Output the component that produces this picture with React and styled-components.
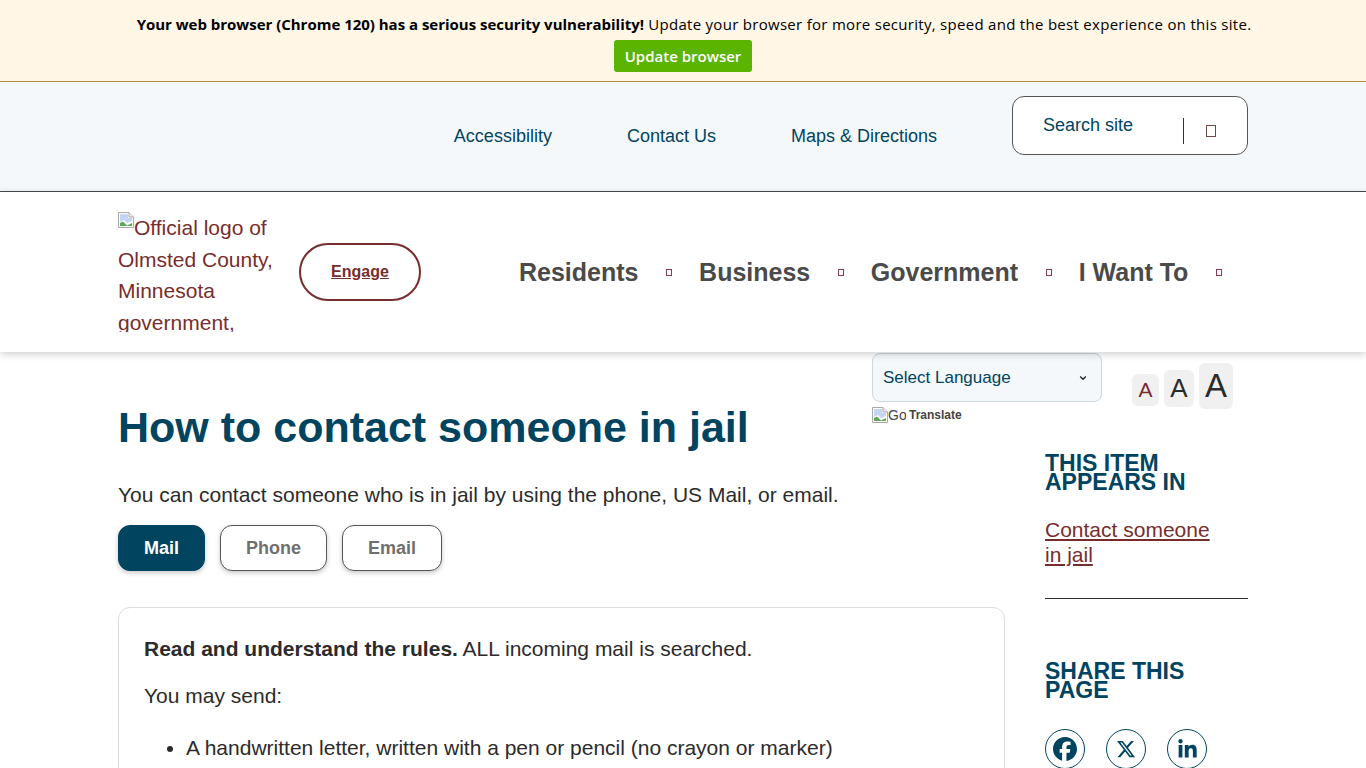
import React from 'react'
import styled, { createGlobalStyle } from 'styled-components'
import { FaFacebook, FaXTwitter, FaLinkedinIn } from 'react-icons/fa6'

const navLinks = ['Accessibility', 'Contact Us', 'Maps & Directions']
const menuItems = ['Residents', 'Business', 'Government', 'I Want To']
const tabs = ['Mail', 'Phone', 'Email']

const BrokenImage = ({ size = 16 }) => (
    <svg width={size} height={size} viewBox='0 0 16 16'>
        <path d='M0.5 0.5H11L15.5 5V15.5H0.5Z' fill='#fff' stroke='#a9a9a9' />
        <path d='M11 0.5V5H15.5' fill='#e8e8e8' stroke='#a9a9a9' />
        <path d='M2 2H10V6H14V9L9 11L6 8L2 10Z' fill='#c3d5f2' />
        <path d='M2 14V11L5 9.5L9 13.5L14 11V14Z' fill='#5fa65a' />
    </svg>
)

const App = () => {
    return (
        <>
            <GlobalStyle />
            <Banner>
                <BannerText>
                    <b>Your web browser (Chrome 120) has a serious security vulnerability!</b> Update your browser for more security, speed and the best experience on this site.
                </BannerText>
                <UpdateButton>Update browser</UpdateButton>
            </Banner>

            <TopBar>
                <TopInner>
                    <TopLinks>
                        {navLinks.map(link => <TopLink key={link}>{link}</TopLink>)}
                    </TopLinks>
                    <SearchBox>
                        <SearchLabel>Search site</SearchLabel>
                        <SearchDivider />
                        <MissingGlyph $w={10} $h={12} $color='#6b4a4a' />
                    </SearchBox>
                </TopInner>
            </TopBar>

            <Header>
                <HeaderInner>
                    <Logo>
                        <LogoIcon><BrokenImage /></LogoIcon>Official logo of Olmsted County, Minnesota government, home page
                    </Logo>
                    <EngageButton>Engage</EngageButton>
                    <Menu>
                        {menuItems.map(item => (
                            <MenuItem key={item}>
                                {item}
                                <MissingGlyph $w={6} $h={7} $color='#8a3a4a' />
                            </MenuItem>
                        ))}
                    </Menu>
                </HeaderInner>
            </Header>

            <Page>
                <Tools>
                    <Translate>
                        <LanguageSelect>
                            Select Language
                            <Chevron viewBox='0 0 8 6'>
                                <path d='M1.2 1.5L4 4.3L6.8 1.5' fill='none' stroke='#222' strokeWidth='1.3' />
                            </Chevron>
                        </LanguageSelect>
                        <Powered>
                            <PoweredLogo><BrokenImage /><span>Google</span></PoweredLogo>
                            Translate
                        </Powered>
                    </Translate>
                    <FontSizes>
                        <FontSize $size={21} $box={27} $h={32} $lift={3} $color='#7a2b2b'>A</FontSize>
                        <FontSize $size={26} $box={30} $h={37} $lift={2} $color='#2b2b2b'>A</FontSize>
                        <FontSize $size={33} $box={34} $h={46} $lift={0} $color='#2b2b2b'>A</FontSize>
                    </FontSizes>
                </Tools>

                <Columns>
                    <Main>
                        <Title>How to contact someone in jail</Title>
                        <Lead>You can contact someone who is in jail by using the phone, US Mail, or email.</Lead>
                        <Tabs>
                            {tabs.map((tab, i) => <Tab key={tab} $active={i === 0}>{tab}</Tab>)}
                        </Tabs>
                        <Card>
                            <CardText><b>Read and understand the rules.</b> ALL incoming mail is searched.</CardText>
                            <CardText>You may send:</CardText>
                            <CardList>
                                <li>A handwritten letter, written with a pen or pencil (no crayon or marker)</li>
                                <li>Photos, no larger than 4 x 6 inches</li>
                            </CardList>
                        </Card>
                    </Main>

                    <Sidebar>
                        <SideHeading>This item appears in</SideHeading>
                        <SideLink>Contact someone in jail</SideLink>
                        <SideRule />
                        <SideHeading>Share this page</SideHeading>
                        <Social>
                            <SocialIcon><FaFacebook size={24} /></SocialIcon>
                            <SocialIcon><FaXTwitter size={20} /></SocialIcon>
                            <SocialIcon><FaLinkedinIn size={21} /></SocialIcon>
                        </Social>
                    </Sidebar>
                </Columns>
            </Page>
        </>
    )
}

export default App

const GlobalStyle = createGlobalStyle`
html, body {
    margin:0;
    padding:0;
    height:768px;
    overflow:hidden;
    background:#fff;
    font-family:"Liberation Sans", Arial, sans-serif;
    color:#2b2b2b;
}
* {
    box-sizing:border-box;
}
`
const Banner = styled.div`
height:82px;
padding-top:13px;
background:#fff6e6;
border-bottom:1px solid #b08d3c;
display:flex;
flex-direction:column;
align-items:center;
font-family:"Open Sans", "Noto Sans", sans-serif;
color:#000;
`
const BannerText = styled.div`
font-size:15px;
line-height:23px;
height:27px;
margin-left:22px;
letter-spacing:0.29px;
white-space:nowrap;
b {
    font-weight:700;
    letter-spacing:-0.014px;
}
`
const UpdateButton = styled.div`
width:138px;
height:32px;
border-radius:3px;
background:#5ab400;
color:#fff;
font-size:15px;
font-weight:600;
line-height:32px;
text-align:center;
`
const TopBar = styled.div`
height:110px;
background:#f4f8fb;
border-bottom:1px solid #4a4a4a;
`
const TopInner = styled.div`
width:1130px;
margin:0 auto;
height:100%;
display:flex;
justify-content:flex-end;
align-items:flex-start;
`
const TopLinks = styled.nav`
display:flex;
gap:75px;
margin-top:43px;
margin-right:75px;
`
const TopLink = styled.a`
font-size:18px;
line-height:22px;
color:#00445f;
`
const SearchBox = styled.div`
width:236px;
height:59px;
margin-top:14px;
background:#fff;
border:1px solid #555;
border-radius:12px;
display:flex;
align-items:flex-start;
padding-left:30px;
`
const SearchLabel = styled.div`
width:140px;
margin-top:18px;
font-size:18px;
line-height:20px;
color:#00445f;
`
const SearchDivider = styled.div`
width:1px;
height:26px;
margin-top:21px;
margin-right:22px;
background:#333;
`
const MissingGlyph = styled.span`
display:inline-block;
flex:none;
width:${p => p.$w}px;
height:${p => p.$h}px;
border:1px solid ${p => p.$color};
${SearchBox} & {
    margin-top:28px;
}
`
const Header = styled.header`
position:relative;
z-index:2;
height:160px;
background:#fff;
box-shadow:0 2px 8px rgba(0,0,0,0.2);
`
const HeaderInner = styled.div`
width:1130px;
margin:0 auto;
height:100%;
display:flex;
align-items:flex-start;
`
const Logo = styled.a`
display:block;
flex:none;
width:160px;
height:120px;
margin-top:20px;
margin-right:21px;
overflow:hidden;
font-size:21px;
line-height:31.7px;
color:#772d2d;
`
const LogoIcon = styled.span`
display:inline-block;
width:16px;
height:16px;
vertical-align:top;
svg {
    display:block;
}
`
const EngageButton = styled.a`
flex:none;
width:122px;
height:58px;
margin-top:51px;
border:2px solid #772d2d;
border-radius:29px;
display:flex;
align-items:center;
justify-content:center;
font-size:16px;
font-weight:700;
text-decoration:underline;
color:#772d2d;
`
const Menu = styled.nav`
display:flex;
flex:none;
margin-left:98px;
margin-top:64px;
`
const MenuItem = styled.a`
display:flex;
align-items:center;
white-space:nowrap;
font-size:25px;
line-height:33px;
font-weight:700;
color:#4a4a4a;
margin-right:27px;
${MissingGlyph} {
    margin-left:27.6px;
}
`
const Page = styled.div`
width:1130px;
margin:0 auto;
`
const Tools = styled.div`
height:50px;
display:flex;
justify-content:flex-end;
align-items:flex-start;
`
const Translate = styled.div`
width:230px;
margin-top:1px;
margin-right:30px;
`
const LanguageSelect = styled.div`
height:49px;
padding:0 14px 0 10px;
background:#f4f8fb;
border:1px solid #ccd7de;
border-radius:8px;
display:flex;
align-items:center;
justify-content:space-between;
font-size:17px;
color:#00445f;
`
const Chevron = styled.svg`
width:8px;
height:6px;
`
const Powered = styled.div`
display:flex;
align-items:center;
margin-top:5px;
font-size:12px;
font-weight:700;
line-height:16px;
color:#444;
`
const PoweredLogo = styled.div`
display:flex;
width:34px;
overflow:hidden;
margin-right:3px;
font-weight:400;
font-size:14px;
svg {
    flex:none;
}
`
const FontSizes = styled.div`
display:flex;
align-items:flex-end;
gap:5px;
height:57px;
flex:none;
margin-right:15px;
`
const FontSize = styled.button`
width:${p => p.$box}px;
height:${p => p.$h}px;
margin-bottom:${p => p.$lift}px;
padding:0;
border:0;
border-radius:6px;
background:#f0f0f0;
font-family:inherit;
font-size:${p => p.$size}px;
color:${p => p.$color};
`
const Columns = styled.div`
display:grid;
grid-template-columns:887px 203px;
column-gap:40px;
`
const Main = styled.main`
min-width:0;
`
const Title = styled.h1`
margin:0;
font-size:43px;
line-height:50px;
font-weight:700;
color:#00445f;
`
const Lead = styled.p`
margin:29px 0 16px;
font-size:21px;
line-height:28px;
`
const Tabs = styled.div`
display:flex;
gap:15px;
`
const Tab = styled.button`
height:46px;
padding:0 25px;
border:1px solid ${p => p.$active ? '#00445f' : '#555'};
border-radius:12px;
background:${p => p.$active ? '#00445f' : '#fff'};
color:${p => p.$active ? '#fff' : '#6f6f6f'};
font-family:inherit;
font-size:18px;
font-weight:700;
box-shadow:0 2px 5px rgba(0,0,0,0.22);
`
const Card = styled.section`
margin-top:36px;
padding:27px 25px;
border:1px solid #ddd;
border-radius:12px;
font-size:21px;
line-height:28px;
`
const CardText = styled.p`
margin:0 0 19px;
`
const CardList = styled.ul`
margin:24px 0 0;
padding-left:42px;
`
const Sidebar = styled.aside`
padding-top:52px;
`
const SideHeading = styled.h2`
margin:0;
font-size:23px;
line-height:19px;
font-weight:700;
text-transform:uppercase;
color:#00445f;
`
const SideLink = styled.a`
display:block;
margin-top:25px;
width:180px;
font-size:21px;
line-height:25px;
text-decoration:underline;
color:#772d2d;
`
const SideRule = styled.hr`
margin:31px 0 63px;
border:0;
border-top:1px solid #333;
`
const Social = styled.div`
display:flex;
gap:21px;
margin-top:29px;
`
const SocialIcon = styled.a`
width:40px;
height:40px;
border:1px solid #00445f;
border-radius:50%;
display:flex;
align-items:center;
justify-content:center;
color:#00445f;
`
